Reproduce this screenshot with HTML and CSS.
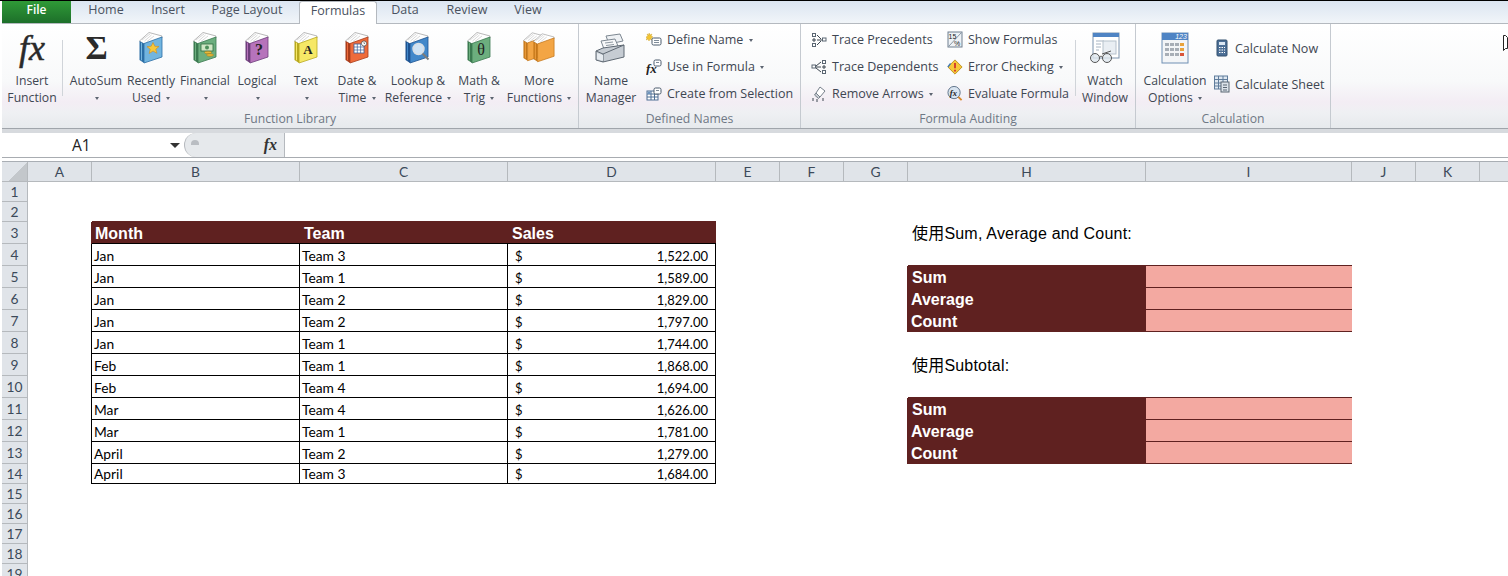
FILE: index.html
```html
<!DOCTYPE html>
<html lang="en">
<head>
    <meta charset="UTF-8">
    <title>Excel - Formulas</title>
    <link rel="stylesheet" href="styles.css">
</head>
<body>
    <!-- shared book shape, colours come from the css variables -->
    <svg class="defs" width="0" height="0">
        <symbol id="book" viewBox="0 0 24 32">
            <path d="M.5 9 10 .5 23 4v2L5 12z" fill="#fff" stroke="#9a9a9a" stroke-width=".7"/>
            <path d="M3 8 11 2M5.500 9l7-6M8 9.500l7-5.500" stroke="#bdbdbd" stroke-width=".6" fill="none"/>
            <path d="M.5 9 5 11.500V31L.5 28z" fill="var(--edge)"/>
            <path d="M2 10.500l1 .5v17.500l-1-.5z" fill="var(--cover)"/>
            <path d="M5 11.500 23 5v20L5 31z" fill="var(--cover)" stroke="var(--edge)" stroke-width=".8"/>
        </symbol>
    </svg>

    <div class="tabs">
        <div class="tab tab-file">File</div>
        <div class="tab tab-home">Home</div>
        <div class="tab tab-insert">Insert</div>
        <div class="tab tab-layout">Page Layout</div>
        <div class="tab tab-active">Formulas</div>
        <div class="tab tab-data">Data</div>
        <div class="tab tab-review">Review</div>
        <div class="tab tab-view">View</div>
    </div>

    <div class="ribbon">
        <div class="group group-library">
            <div class="group-items">
                <div class="big w-insert">
                    <div class="big-icon"><span class="fx-big">fx</span></div>
                    <span>Insert</span><span>Function</span>
                </div>
                <div class="vsep"></div>
                <div class="big w-autosum">
                    <div class="big-icon"><span class="sigma">Σ</span></div>
                    <span>AutoSum</span><span><i class="arrow"></i></span>
                </div>
                <div class="big w-recent">
                    <div class="big-icon">
                        <svg class="book c-blue" width="24" height="32" viewBox="0 0 24 32"><use href="#book"/><path d="M14 10.500l1.800 3.800 4.200.2-3.200 2.700 1.100 4.100-3.900-2.300-3.800 2.500 1-4.300-3.200-2.500 4.200-.5z" fill="#f7c83a" stroke="#d08a1c" stroke-width=".6"/></svg>
                    </div>
                    <span>Recently</span><span>Used <i class="arrow"></i></span>
                </div>
                <div class="big w-financial">
                    <div class="big-icon">
                        <svg class="book c-green" width="24" height="32" viewBox="0 0 24 32"><use href="#book"/><rect x="8" y="12" width="12" height="7" fill="#cfe6c4" stroke="#2f6b3f" stroke-width=".8"/><circle cx="14" cy="15.500" r="2" fill="#4d8f5a"/><ellipse cx="15" cy="20.500" rx="3.500" ry="1.300" fill="#e9b93a" stroke="#9a7414" stroke-width=".5"/><ellipse cx="17" cy="23" rx="3.500" ry="1.300" fill="#e9b93a" stroke="#9a7414" stroke-width=".5"/></svg>
                    </div>
                    <span>Financial</span><span><i class="arrow"></i></span>
                </div>
                <div class="big w-logical">
                    <div class="big-icon">
                        <svg class="book c-purple" width="24" height="32" viewBox="0 0 24 32"><use href="#book"/><text x="14" y="23" class="icon-letter" font-size="16">?</text></svg>
                    </div>
                    <span>Logical</span><span><i class="arrow"></i></span>
                </div>
                <div class="big w-text">
                    <div class="big-icon">
                        <svg class="book c-yellow" width="24" height="32" viewBox="0 0 24 32"><use href="#book"/><text x="14" y="22" class="icon-letter" font-size="13">A</text></svg>
                    </div>
                    <span>Text</span><span><i class="arrow"></i></span>
                </div>
                <div class="big w-date">
                    <div class="big-icon">
                        <svg class="book c-red" width="24" height="32" viewBox="0 0 24 32"><use href="#book"/><rect x="9" y="12" width="10" height="9" fill="#fff" stroke="#3a5f9a" stroke-width=".8"/><path d="M9 15h10M9 18h10M12.300 12v9M15.600 12v9" stroke="#3a5f9a" stroke-width=".7"/><circle cx="19" cy="11.500" r="2.600" fill="#fff" stroke="#444" stroke-width=".7"/><path d="M19 10v1.500h1" stroke="#444" stroke-width=".6" fill="none"/></svg>
                    </div>
                    <span>Date &amp;</span><span>Time <i class="arrow"></i></span>
                </div>
                <div class="big w-lookup">
                    <div class="big-icon">
                        <svg class="book c-navy" width="26" height="32" viewBox="0 0 26 32"><use href="#book" width="24" height="32"/><circle cx="13.500" cy="17" r="5.500" fill="#cfe3f5" stroke="#d9dee3" stroke-width="1.400"/><path d="M17.500 21.500l6 6" stroke="#7b7b7b" stroke-width="2"/></svg>
                    </div>
                    <span>Lookup &amp;</span><span>Reference <i class="arrow"></i></span>
                </div>
                <div class="big w-math">
                    <div class="big-icon">
                        <svg class="book c-green" width="24" height="32" viewBox="0 0 24 32"><use href="#book"/><text x="14" y="23" class="icon-theta" font-size="16">θ</text></svg>
                    </div>
                    <span>Math &amp;</span><span>Trig <i class="arrow"></i></span>
                </div>
                <div class="big w-more">
                    <div class="big-icon">
                        <svg class="book c-orange" width="32" height="32" viewBox="0 0 32 32"><use href="#book" x="0" y="0" width="22" height="30"/><use href="#book" x="10" y="1" width="22" height="30"/></svg>
                    </div>
                    <span>More</span><span>Functions <i class="arrow"></i></span>
                </div>
            </div>
            <div class="group-label">Function Library</div>
        </div>

        <div class="group group-names">
            <div class="group-items">
                <div class="big w-name">
                    <div class="big-icon">
                        <svg width="32" height="32" viewBox="0 0 32 32">
                            <path d="M11 4l14-2 3 7-14 3z" fill="#eef1f4" stroke="#7d8791"/>
                            <path d="M6 9l14-2 3 7-14 3z" fill="#f7f8f9" stroke="#7d8791"/>
                            <path d="M10 11l8-1M11 13.500l8-1" stroke="#8d97a0"/>
                            <path d="M1 19l7-3 21-3v12L8 30l-7-2z" fill="#c6ccd3" stroke="#5f6973"/>
                            <path d="M1 19l7 3 21-9M8 22v8" fill="none" stroke="#5f6973"/>
                            <path d="M2 21l6 2v6l-6-2z" fill="#e6ebf0"/>
                        </svg>
                    </div>
                    <span>Name</span><span>Manager</span>
                </div>
                <div class="small-col col-names">
                    <div class="small">
                        <svg width="16" height="16" viewBox="0 0 16 16"><path d="M3 1l1 2 2-1-1 2 2 1-2 1 1 2-2-1-1 2-1-2-2 1 1-2-1-1 2-1-1-2 2 1z" fill="#f2c431" stroke="#c99a18" stroke-width=".4"/><rect x="6" y="6" width="9" height="7" rx="1.500" fill="#fff" stroke="#4b5b6c"/><path d="M8 8.500h5M8 10.500h5" stroke="#7f8c99"/></svg>
                        <span>Define Name <i class="arrow"></i></span>
                    </div>
                    <div class="small">
                        <svg width="16" height="16" viewBox="0 0 16 16"><text x="0" y="14" class="icon-fx" font-size="13">fx</text><rect x="8" y="1" width="7" height="6" rx="1.500" fill="#fff" stroke="#4b5b6c"/><path d="M10 3.500h3" stroke="#7f8c99"/></svg>
                        <span>Use in Formula <i class="arrow"></i></span>
                    </div>
                    <div class="small">
                        <svg width="16" height="16" viewBox="0 0 16 16"><rect x="1" y="5" width="11" height="9" fill="#fff" stroke="#4f6f94"/><path d="M1 8h11M1 11h11M5 5v9M8.500 5v9" stroke="#4f6f94"/><rect x="1.500" y="5.500" width="3" height="2.500" fill="#6f94bd"/><rect x="8" y="2" width="7" height="6" rx="1.500" fill="#fff" stroke="#4b5b6c"/><path d="M10 4.500h3" stroke="#7f8c99"/></svg>
                        <span>Create from Selection</span>
                    </div>
                </div>
            </div>
            <div class="group-label">Defined Names</div>
        </div>

        <div class="group group-audit">
            <div class="group-items">
                <div class="small-col col-trace">
                    <div class="small">
                        <svg width="16" height="16" viewBox="0 0 16 16"><g fill="#fff" stroke="#5a6672"><rect x="1.500" y="1.500" width="3" height="3"/><rect x="1.500" y="11.500" width="3" height="3"/><rect x="11.500" y="6" width="3.500" height="3"/></g><path d="M3 6v4M1 8h4M6 8h5M6 3l4 4M6 13l4-4" stroke="#3c4650" fill="none"/></svg>
                        <span>Trace Precedents</span>
                    </div>
                    <div class="small">
                        <svg width="16" height="16" viewBox="0 0 16 16"><g fill="#fff" stroke="#5a6672"><rect x="1" y="6" width="3.500" height="3"/><rect x="11.500" y="1.500" width="3" height="3"/><rect x="11.500" y="11.500" width="3" height="3"/></g><path d="M13 6v4M11 8h4M5 8h5M5 7l5-4M5 9l5 4" stroke="#3c4650" fill="none"/></svg>
                        <span>Trace Dependents</span>
                    </div>
                    <div class="small">
                        <svg width="16" height="16" viewBox="0 0 16 16"><path d="M9 1l5 4-5 6-4-4z" fill="#fff" stroke="#77818b"/><path d="M5 7l4 4-1.500 1.500L3.500 9z" fill="#c9ced4" stroke="#77818b"/><path d="M2 12v3M6 13v3M12 12v3" stroke="#3c4650"/></svg>
                        <span>Remove Arrows <i class="arrow"></i></span>
                    </div>
                </div>
                <div class="small-col col-show">
                    <div class="small">
                        <svg width="16" height="18" viewBox="0 0 16 18"><rect x="1" y="1" width="14" height="15" fill="#eef2f6" stroke="#6f7f8f"/><path d="M2 15L14 2" stroke="#8a98a6"/><text x="1.500" y="8" class="icon-pct" font-size="7">15</text><text x="7" y="15" class="icon-pct" font-size="7">%</text></svg>
                        <span>Show Formulas</span>
                    </div>
                    <div class="small">
                        <svg width="18" height="18" viewBox="0 0 18 18"><path d="M9 1l8 8-8 8-8-8z" fill="#f7c83a" stroke="#b98c18"/><path d="M9 4.500v6M9 12v2" stroke="#d0342c" stroke-width="2"/><path d="M1 9l3-4" stroke="#3f78b5" stroke-width="1.500"/></svg>
                        <span>Error Checking <i class="arrow"></i></span>
                    </div>
                    <div class="small">
                        <svg width="17" height="17" viewBox="0 0 17 17"><circle cx="7.500" cy="7.500" r="6.500" fill="#d8e4f0" stroke="#5a6f85"/><text x="3" y="11" class="icon-fx" font-size="9">fx</text><path d="M12 12l3.500 3.500" stroke="#d8892a" stroke-width="2"/></svg>
                        <span>Evaluate Formula</span>
                    </div>
                </div>
                <div class="vsep vsep-watch"></div>
                <div class="big w-watch">
                    <div class="big-icon">
                        <svg width="32" height="32" viewBox="0 0 32 32">
                            <rect x="4" y="1" width="26" height="25" fill="#fff" stroke="#7d93ad"/>
                            <rect x="4" y="1" width="26" height="4" fill="#4f84c4"/>
                            <path d="M7 9h8M7 12h5M7 15h5M7 18h3" stroke="#a7b4c2"/>
                            <rect x="14" y="9" width="13" height="13" fill="#e9eef3" stroke="#b6c1cc"/>
                            <circle cx="6" cy="26" r="4.500" fill="#dfe7ee" fill-opacity=".8" stroke="#555"/>
                            <circle cx="18" cy="26" r="4.500" fill="#dfe7ee" fill-opacity=".8" stroke="#555"/>
                            <path d="M10.500 25c1-1 2-1 3 0M13 22l9-3" stroke="#555" fill="none"/>
                        </svg>
                    </div>
                    <span>Watch</span><span>Window</span>
                </div>
            </div>
            <div class="group-label">Formula Auditing</div>
        </div>

        <div class="group group-calc">
            <div class="group-items">
                <div class="big w-options">
                    <div class="big-icon">
                        <svg width="28" height="32" viewBox="0 0 28 32">
                            <rect x="1" y="1" width="26" height="30" fill="#f3f5f7" stroke="#6f8fb3"/>
                            <rect x="1" y="1" width="26" height="7" fill="#4f84c4"/>
                            <text x="20" y="7" class="icon-num" font-size="7">123</text>
                            <g fill="#a7aeb6"><rect x="4" y="11" width="4" height="3"/><rect x="9" y="11" width="4" height="3"/><rect x="14" y="11" width="4" height="3"/><rect x="4" y="16" width="4" height="3"/><rect x="9" y="16" width="4" height="3"/><rect x="14" y="16" width="4" height="3"/><rect x="4" y="21" width="4" height="3"/><rect x="9" y="21" width="4" height="3"/><rect x="14" y="21" width="4" height="3"/></g>
                            <rect x="19" y="11" width="4" height="3" fill="#e8a33c"/><rect x="19" y="16" width="4" height="3" fill="#e8a33c"/><rect x="19" y="21" width="4" height="3" fill="#d9543a"/>
                        </svg>
                    </div>
                    <span>Calculation</span><span>Options <i class="arrow"></i></span>
                </div>
                <div class="small-col col-calc">
                    <div class="small small-wide">
                        <svg width="16" height="18" viewBox="0 0 16 18"><rect x="3" y="1" width="10" height="16" rx="1" fill="#4c6f96" stroke="#33506f"/><rect x="5" y="3" width="6" height="3" fill="#dbe7f3"/><path d="M5 8.500h1.500M7.500 8.500H9M10 8.500h1M5 11h1.500M7.500 11H9M10 11h1M5 13.500h1.500M7.500 13.500H9M10 13.500h1" stroke="#fff"/></svg>
                        <span>Calculate Now</span>
                    </div>
                    <div class="small small-wide">
                        <svg width="16" height="18" viewBox="0 0 16 18"><rect x=".5" y="1" width="13" height="13" fill="#dfe8f1" stroke="#5f7c9b"/><path d="M.5 4.500h13M.5 8h13M.5 11h13M4.500 1v13M9 1v13" stroke="#5f7c9b"/><rect x="7" y="7" width="8" height="10" fill="#dce3ea" stroke="#5a6672"/><path d="M9 10h4M9 12.500h4M9 15h4" stroke="#5a6672"/></svg>
                        <span>Calculate Sheet</span>
                    </div>
                </div>
            </div>
            <div class="group-label">Calculation</div>
        </div>
    </div>

    <div class="strip"></div>

    <div class="formula-bar">
        <div class="name-box"><span class="cell-ref">A1</span><i class="name-arrow"></i></div>
        <div class="fx-pill"><i class="pill-knob"></i><span class="fx-small">fx</span></div>
        <div class="formula-input"></div>
    </div>

    <table class="sheet">
        <colgroup>
            <col class="c-head"><col class="c-64"><col class="c-208"><col class="c-208"><col class="c-208"><col class="c-64"><col class="c-64"><col class="c-64"><col class="c-h"><col class="c-i"><col class="c-64"><col class="c-64"><col class="c-last">
        </colgroup>
        <tr class="head-row">
            <th class="corner"></th><th>A</th><th>B</th><th>C</th><th>D</th><th>E</th><th>F</th><th>G</th><th>H</th><th>I</th><th>J</th><th>K</th><th class="no-line"></th>
        </tr>
        <tr class="r20"><th>1</th><td colspan="12"></td></tr>
        <tr class="r20"><th>2</th><td></td><td class="top-b"></td><td class="top-b"></td><td class="top-b"></td><td colspan="8"></td></tr>
        <tr class="r22"><th>3</th><td class="edge-b"></td><td class="title">Month</td><td class="title">Team</td><td class="title">Sales</td><td colspan="3"></td><td class="note" colspan="2">使用Sum, Average and Count:</td><td colspan="3"></td></tr>
        <tr class="r22"><th>4</th><td class="edge"></td><td class="cell">Jan</td><td class="cell">Team 3</td><td class="cell money"><span class="cur">$</span>1,522.00</td><td colspan="3"></td><td class="top-b"></td><td class="top-b"></td><td colspan="3"></td></tr>
        <tr class="r22"><th>5</th><td class="edge"></td><td class="cell">Jan</td><td class="cell">Team 1</td><td class="cell money"><span class="cur">$</span>1,589.00</td><td colspan="2"></td><td class="edge-b"></td><td class="label label-sum">Sum</td><td class="pink"></td><td colspan="3"></td></tr>
        <tr class="r22"><th>6</th><td class="edge"></td><td class="cell">Jan</td><td class="cell">Team 2</td><td class="cell money"><span class="cur">$</span>1,829.00</td><td colspan="2"></td><td class="edge-b"></td><td class="label">Average</td><td class="pink"></td><td colspan="3"></td></tr>
        <tr class="r22"><th>7</th><td class="edge"></td><td class="cell">Jan</td><td class="cell">Team 2</td><td class="cell money"><span class="cur">$</span>1,797.00</td><td colspan="2"></td><td class="edge-b"></td><td class="label">Count</td><td class="pink"></td><td colspan="3"></td></tr>
        <tr class="r22"><th>8</th><td class="edge"></td><td class="cell">Jan</td><td class="cell">Team 1</td><td class="cell money"><span class="cur">$</span>1,744.00</td><td colspan="8"></td></tr>
        <tr class="r22"><th>9</th><td class="edge"></td><td class="cell">Feb</td><td class="cell">Team 1</td><td class="cell money"><span class="cur">$</span>1,868.00</td><td colspan="3"></td><td class="note" colspan="2">使用Subtotal:</td><td colspan="3"></td></tr>
        <tr class="r22"><th>10</th><td class="edge"></td><td class="cell">Feb</td><td class="cell">Team 4</td><td class="cell money"><span class="cur">$</span>1,694.00</td><td colspan="3"></td><td class="top-b"></td><td class="top-b"></td><td colspan="3"></td></tr>
        <tr class="r22"><th>11</th><td class="edge"></td><td class="cell">Mar</td><td class="cell">Team 4</td><td class="cell money"><span class="cur">$</span>1,626.00</td><td colspan="2"></td><td class="edge-b"></td><td class="label label-sum">Sum</td><td class="pink"></td><td colspan="3"></td></tr>
        <tr class="r22"><th>12</th><td class="edge"></td><td class="cell">Mar</td><td class="cell">Team 1</td><td class="cell money"><span class="cur">$</span>1,781.00</td><td colspan="2"></td><td class="edge-b"></td><td class="label">Average</td><td class="pink"></td><td colspan="3"></td></tr>
        <tr class="r22"><th>13</th><td class="edge"></td><td class="cell">April</td><td class="cell">Team 2</td><td class="cell money"><span class="cur">$</span>1,279.00</td><td colspan="2"></td><td class="edge-b"></td><td class="label">Count</td><td class="pink"></td><td colspan="3"></td></tr>
        <tr class="r20"><th>14</th><td class="edge"></td><td class="cell">April</td><td class="cell">Team 3</td><td class="cell money"><span class="cur">$</span>1,684.00</td><td colspan="8"></td></tr>
        <tr class="r20"><th>15</th><td colspan="12"></td></tr>
        <tr class="r20"><th>16</th><td colspan="12"></td></tr>
        <tr class="r20"><th>17</th><td colspan="12"></td></tr>
        <tr class="r20"><th>18</th><td colspan="12"></td></tr>
        <tr class="r20"><th>19</th><td colspan="12"></td></tr>
    </table>

    <!-- mouse pointer caught at the right edge of the capture -->
    <svg class="pointer" width="5" height="16" viewBox="0 0 5 16"><path d="M.5 .5h2l2 2v11h-2l-2 2z" fill="#fff" stroke="#222"/></svg>
</body>
</html>
```

FILE: styles.css
```css
html, body {
    height: 576px;
    overflow: hidden;
}
body {
    position: relative;
    margin: 0;
    padding-left: 2px;
    background-color: #ffffff;
    border-top: 1px solid #000;
    box-sizing: border-box;
    font-family: "Open Sans", "Noto Sans", sans-serif;
    font-size: 12.500px;
    color: #3e4652;
}
.defs {
    position: absolute;
}

/* tabs */
.tabs {
    display: flex;
    height: 22px;
    background: linear-gradient(#dbe5f1, #f1f5f9);
}
.tab {
    box-sizing: border-box;
    height: 23px;
    line-height: 17px;
    text-align: center;
    color: #4a5260;
    font-size: 12.500px;
    padding-top: 0;
}
.tab-file {
    width: 69px;
    height: 22px;
    background: linear-gradient(#2f9a37, #1d6f2a);
    color: #fff;
    font-size: 12px;
    font-weight: 600;
}
.tab-home { width: 70px; }
.tab-insert { width: 54px; }
.tab-layout { width: 104px; }
.tab-active {
    width: 78px;
    background-color: #fff;
    border: 1px solid #b4b9bf;
    border-bottom: none;
    border-radius: 3px 3px 0 0;
    position: relative;
    z-index: 1;
}
.tab-data { width: 56px; }
.tab-review { width: 68px; }
.tab-view { width: 54px; }

/* ribbon */
.ribbon {
    display: flex;
    box-sizing: border-box;
    height: 106px;
    border-top: 1px solid #b4b9bf;
    border-bottom: 1px solid #a0a5ab;
    background: linear-gradient(#fff 0%, #f8f9fa 55%, #f3edf4 75%, #eff0f3 85%, #e7eaed 100%);
}
.group {
    display: flex;
    flex-direction: column;
    box-sizing: border-box;
    height: 104px;
    border-right: 1px solid #c5cad0;
}
.group-library { width: 577px; }
.group-names { width: 222px; }
.group-audit { width: 335px; }
.group-calc { width: 195px; }
.group-items {
    display: flex;
    flex: 1;
}
.group-label {
    height: 19px;
    line-height: 19px;
    font-size: 12.200px;
    text-align: center;
    color: #6f7885;
}
.big {
    display: flex;
    flex-direction: column;
    align-items: center;
    flex-shrink: 0;
    padding-top: 8px;
    white-space: nowrap;
    font-size: 12.200px;
    line-height: 17px;
}
.big-icon {
    display: flex;
    align-items: center;
    justify-content: center;
    height: 32px;
    margin-bottom: 8px;
}
.w-insert { width: 60px; }
.w-autosum { width: 56px; margin-left: 5px; }
.w-recent { width: 54px; }
.w-financial { width: 54px; }
.w-logical { width: 50px; }
.w-text { width: 48px; }
.w-date { width: 54px; }
.w-lookup { width: 58px; margin-left: 5px; }
.w-math { width: 64px; }
.w-more { width: 56px; }
.w-name { width: 60px; margin-left: 2px; }
.w-watch { width: 58px; }
.w-options { width: 70px; margin-left: 4px; }
.vsep {
    width: 1px;
    height: 56px;
    margin-top: 16px;
    background-color: #d0d4d9;
    flex-shrink: 0;
}
.small-col {
    display: flex;
    flex-direction: column;
    padding-top: 2px;
}
.small {
    display: flex;
    align-items: center;
    gap: 5px;
    height: 27px;
    white-space: nowrap;
}
.small svg {
    flex-shrink: 0;
    width: 16px;
}
.small-wide {
    height: 36px;
}
.col-names { margin-left: 5px; }
.col-trace { margin-left: 10px; width: 136px; }
.col-show { width: 128px; }
.col-calc { margin-left: 4px; padding-top: 6px; }
.arrow {
    display: inline-block;
    width: 0;
    height: 0;
    margin-left: 2px;
    vertical-align: 2px;
    border-left: 2.500px solid transparent;
    border-right: 2.500px solid transparent;
    border-top: 3px solid #5c6470;
}

/* icon colours */
.c-blue { --cover: #72b5df; --edge: #2c6fa6; }
.c-green { --cover: #6cae7e; --edge: #3b7a50; }
.c-purple { --cover: #b673bb; --edge: #6e3f7c; }
.c-yellow { --cover: #f6e866; --edge: #b9a91f; }
.c-red { --cover: #ee6b3b; --edge: #a93d1c; }
.c-navy { --cover: #4288ca; --edge: #1e5492; }
.c-orange { --cover: #f3a544; --edge: #c47619; }
.fx-big {
    font-family: "Liberation Serif", serif;
    font-style: italic;
    font-size: 36px;
    line-height: 32px;
    color: #2a2a2a;
    -webkit-text-stroke: .5px #2a2a2a;
}
.sigma {
    font-family: "Liberation Serif", serif;
    font-weight: bold;
    font-size: 34px;
    line-height: 32px;
    color: #2b2b2b;
    margin-left: 1px;
}
.icon-letter {
    font-family: "Liberation Serif", serif;
    font-weight: bold;
    text-anchor: middle;
    fill: #222;
}
.icon-theta {
    font-family: "Liberation Serif", serif;
    text-anchor: middle;
    fill: #222;
}
.icon-fx {
    font-family: "Liberation Serif", serif;
    font-style: italic;
    font-weight: bold;
    fill: #222;
}
.icon-pct {
    font-family: "Liberation Sans", sans-serif;
    fill: #222;
}
.icon-num {
    font-family: "Liberation Sans", sans-serif;
    font-style: italic;
    text-anchor: middle;
    fill: #fff;
}

/* bar under the ribbon */
.strip {
    height: 4px;
    background-color: #d7dade;
}
.formula-bar {
    display: flex;
    box-sizing: border-box;
    height: 25px;
    border-bottom: 1px solid #a8acb1;
}
.name-box {
    display: flex;
    align-items: center;
    justify-content: space-between;
    box-sizing: border-box;
    width: 182px;
    padding: 0 8px 0 70px;
    font-size: 15.500px;
    color: #222;
}
.name-arrow {
    border-left: 5px solid transparent;
    border-right: 5px solid transparent;
    border-top: 5px solid #333;
    margin-right: -4px;
}
.fx-pill {
    display: flex;
    align-items: center;
    justify-content: space-between;
    box-sizing: border-box;
    width: 101px;
    padding: 0 7px 0 6px;
    background-color: #e6e9ec;
    border: 1px solid #b5b9be;
    border-width: 0 1px 0 1px;
    border-radius: 12px 0 0 12px;
}
.pill-knob {
    width: 8px;
    height: 5px;
    margin-bottom: 6px;
    border-radius: 4px 4px 0 0;
    background-color: #b9bdc2;
}
.fx-small {
    font-family: "Liberation Serif", serif;
    font-style: italic;
    font-weight: bold;
    font-size: 16px;
    color: #333;
}
.formula-input {
    flex: 1;
}

/* sheet */
.sheet {
    table-layout: fixed;
    width: 1506px;
    border-collapse: separate;
    border-spacing: 0;
    margin-top: 3px;
    border-top: 1px solid #a9aeb4;
    font-family: Lato, "Open Sans", sans-serif;
    font-size: 13.800px;
    line-height: 18px;
    color: #000;
}
.c-head { width: 26px; }
.c-64 { width: 64px; }
.c-208 { width: 208px; }
.c-h { width: 238px; }
.c-i { width: 206px; }
.c-last { width: 28px; }
.sheet th, .sheet td {
    box-sizing: border-box;
    padding: 0;
    white-space: nowrap;
}
.sheet th {
    background-color: #e0e4e9;
    border-right: 1px solid #b5b9bd;
    border-bottom: 1px solid #b5b9bd;
    font-weight: normal;
    color: #3c4a5a;
    text-align: center;
}
.sheet th.no-line {
    border-right: none;
}
.head-row { height: 20px; }
.r20 { height: 20px; }
.r22 { height: 22px; }
.sheet .corner {
    background: linear-gradient(135deg, #e0e4e9 58%, #c3c7cb 58%);
}
.sheet td.title {
    background-color: #5f2120;
    border-bottom: 1px solid #000;
    color: #fff;
    font-family: "Liberation Sans", sans-serif;
    font-size: 16px;
    font-weight: bold;
    padding: 2px 0 0 3px;
}
.sheet td.title + td.title {
    padding-left: 4px;
}
.sheet td.top-b {
    border-bottom: 1px solid #5f2120;
}
.sheet td.edge {
    border-right: 1px solid #000;
}
.sheet td.edge-b {
    border-right: 1px solid #5f2120;
}
.sheet td.cell {
    border-right: 1px solid #000;
    border-bottom: 1px solid #000;
    padding: 1px 0 0 2px;
}
.r22 td.cell {
    padding-top: 2px;
}
.sheet td.money {
    text-align: right;
    padding-right: 7px;
    font-size: 13px;
}
.cur {
    float: left;
    padding-left: 5px;
}
.sheet td.note {
    font-family: "Liberation Sans", "Noto Sans CJK SC", sans-serif;
    font-size: 16px;
    letter-spacing: .2px;
    padding: 1px 0 0 4px;
    line-height: 20px;
}
.sheet td.label {
    background-color: #5f2120;
    color: #fff;
    font-family: "Liberation Sans", sans-serif;
    font-size: 16px;
    font-weight: bold;
    padding: 1px 0 0 3px;
}
.sheet td.label-sum {
    padding-left: 4px;
}
.sheet td.pink {
    background-color: #f3a9a1;
    border-bottom: 1px solid #5f2120;
}
.pointer {
    position: absolute;
    top: 34px;
    right: 0;
}
```
